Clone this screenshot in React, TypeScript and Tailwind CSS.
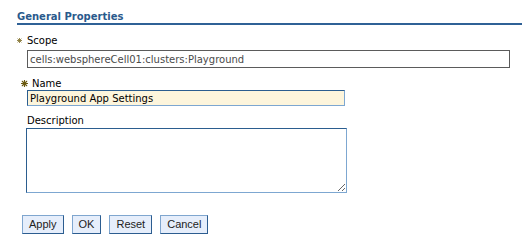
import React from "react";

const Star = ({ big = false }: { big?: boolean }) => (
  <svg
    width={big ? 7 : 5}
    height={big ? 7 : 5}
    viewBox="0 0 10 10"
    className="shrink-0"
  >
    <g stroke={big ? "#6b5a10" : "#8a7a3a"} strokeWidth={big ? 1.6 : 1.8} strokeLinecap="round">
      <line x1="5" y1="0.5" x2="5" y2="9.5" />
      <line x1="0.5" y1="5" x2="9.5" y2="5" />
      <line x1="1.8" y1="1.8" x2="8.2" y2="8.2" />
      <line x1="8.2" y1="1.8" x2="1.8" y2="8.2" />
    </g>
  </svg>
);

const Btn = ({ label }: { label: string }) => (
  <button
    type="button"
    className="h-[19px] px-[6px] bg-[#e6eefb] border border-t-[#7fa6cf] border-l-[#7fa6cf] border-r-[#2c5d90] border-b-[#2c5d90] text-[11px] leading-none text-[#222] font-['Liberation_Sans',Arial,sans-serif]"
  >
    {label}
  </button>
);

export default function App() {
  return (
    <div className="w-[522px] h-[247px] bg-white font-['DejaVu_Sans',Verdana,sans-serif] text-[10px] text-black overflow-hidden">
      <div className="pl-[17px] pt-[11px]">
        <div className="font-bold text-[10px] leading-[12px] text-[#2a5a8c]">General Properties</div>
        <div className="h-[2px] bg-[#2f6196]" />
      </div>

      <div className="pl-[17px] mt-[9px]">
        <div className="flex items-center h-[13px]">
          <Star />
          <span className="ml-[5px] text-[10px] leading-[13px]">Scope</span>
        </div>
      </div>
      <div className="pl-[27px] mt-[3px]">
        <div className="w-[483px] h-[18px] border border-[#5b5b5b] flex items-center px-[2px] text-[10px] text-[#4a4a4a] whitespace-nowrap">
          cells:websphereCell01:clusters:Playground
        </div>
      </div>

      <div className="pl-[21px] mt-[10px]">
        <div className="flex items-center h-[11px]">
          <Star big />
          <span className="ml-[4px] text-[10px] leading-[11px]">Name</span>
        </div>
      </div>
      <div className="pl-[27px] mt-[1px]">
        <div className="w-[318px] h-[16px] border border-t-[#2b5d8f] border-l-[#2b5d8f] border-r-[#7da7d1] border-b-[#7da7d1] bg-[#fdf5dc] flex items-center px-[2px] text-[10px] text-black whitespace-nowrap">
          Playground App Settings
        </div>
      </div>

      <div className="pl-[27px] mt-[8px] text-[10px] leading-[13px]">Description</div>
      <div className="pl-[26px] mt-[1px]">
        <textarea
          readOnly
          className="block w-[321px] h-[65px] border border-t-[#2b5d8f] border-l-[#2b5d8f] border-r-[#7da7d1] border-b-[#7da7d1] bg-white outline-none resize"
        />
      </div>

      <div className="pl-[22px] mt-[22px] flex gap-[8px]">
        <Btn label="Apply" />
        <Btn label="OK" />
        <Btn label="Reset" />
        <Btn label="Cancel" />
      </div>
    </div>
  );
}
